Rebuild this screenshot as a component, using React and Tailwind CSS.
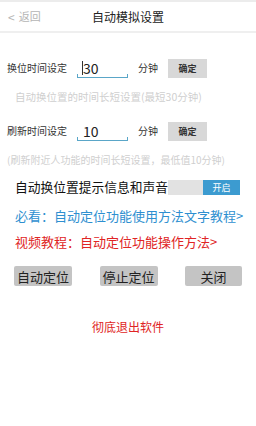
import React from "react";

const font = { fontFamily: '"Noto Sans CJK SC", "Noto Sans", sans-serif' };

function TimeRow({ label, value, caret }) {
  return (
    <div className="flex items-center h-[20px]">
      <span className="w-[74px] pl-[7px] text-[10px] leading-none text-[#333]">{label}</span>
      <div className="relative w-[51px] h-[20px] ml-[3px] border-b border-[#5aa6c8] flex items-center">
        <div className="absolute left-0 bottom-0 w-px h-[3px] bg-[#5aa6c8]" />
        <div className="absolute right-0 bottom-0 w-px h-[3px] bg-[#5aa6c8]" />
        {caret && <div className="w-px h-[14px] bg-[#333] ml-[5px]" />}
        <span className={`text-[14px] leading-none text-[#222] ${caret ? "" : "ml-[6px]"}`}>{value}</span>
      </div>
      <span className="ml-[10px] text-[10px] leading-none text-[#333]">分钟</span>
      <button className="ml-[10px] w-[39px] h-[19px] bg-[#d8d8d8] text-[9px] leading-none font-bold text-[#333]">确定</button>
    </div>
  );
}

export default function App() {
  return (
    <div className="w-[256px] h-[426px] bg-white overflow-hidden" style={font}>
      <div className="h-[2px] bg-[#ececec]" />
      <div className="h-[31px] flex items-center relative border-b-2 border-[#efefef]">
        <span className="ml-[8px] text-[11px] leading-none text-[#b5b5b5] flex items-center gap-[4px]">
          <span className="text-[12px]">&lt;</span>返回
        </span>
        <span className="absolute left-0 right-0 text-center text-[12px] leading-none text-[#222]">自动模拟设置</span>
      </div>
      <div className="pt-[25px]">
        <TimeRow label="换位时间设定" value="30" caret />
        <div className="mt-[12px] pl-[15px] text-[10.5px] leading-[14px] text-[#cfcfcf] whitespace-nowrap">自动换位置的时间长短设置(最短30分钟)</div>
        <div className="mt-[17px]">
          <TimeRow label="刷新时间设定" value="10" />
        </div>
        <div className="mt-[12px] pl-[7px] text-[10px] leading-[14px] text-[#cfcfcf] whitespace-nowrap">(刷新附近人功能的时间长短设置，最低值10分钟)</div>
        <div className="mt-[13px] flex items-center h-[15px]">
          <span className="pl-[15px] w-[168px] text-[12.75px] leading-none text-[#111] whitespace-nowrap">自动换位置提示信息和声音</span>
          <div className="w-[35px] h-[15px] bg-[#e2e2e2]" />
          <div className="w-[37px] h-[15px] bg-[#3c9bd0] text-white text-[9px] leading-none flex items-center justify-center">开启</div>
        </div>
        <div className="mt-[13px] pl-[15px] text-[13px] leading-[16px] text-[#2e8fd0] whitespace-nowrap">必看：自动定位功能使用方法文字教程&gt;</div>
        <div className="mt-[10px] pl-[15px] text-[13px] leading-[16px] text-[#e02424] whitespace-nowrap">视频教程：自动定位功能操作方法&gt;</div>
        <div className="mt-[16px] flex justify-between px-[14px]">
          <button className="w-[58px] h-[20px] rounded-[2px] bg-[#c4c4c4] text-[13px] leading-none text-[#222]">自动定位</button>
          <button className="w-[58px] h-[20px] rounded-[2px] bg-[#c4c4c4] text-[13px] leading-none text-[#222]">停止定位</button>
          <button className="w-[57px] h-[20px] rounded-[2px] bg-[#c4c4c4] text-[13px] leading-none text-[#222]">关闭</button>
        </div>
        <div className="mt-[33px] text-center text-[12px] leading-[16px] text-[#e02424]">彻底退出软件</div>
      </div>
    </div>
  );
}
